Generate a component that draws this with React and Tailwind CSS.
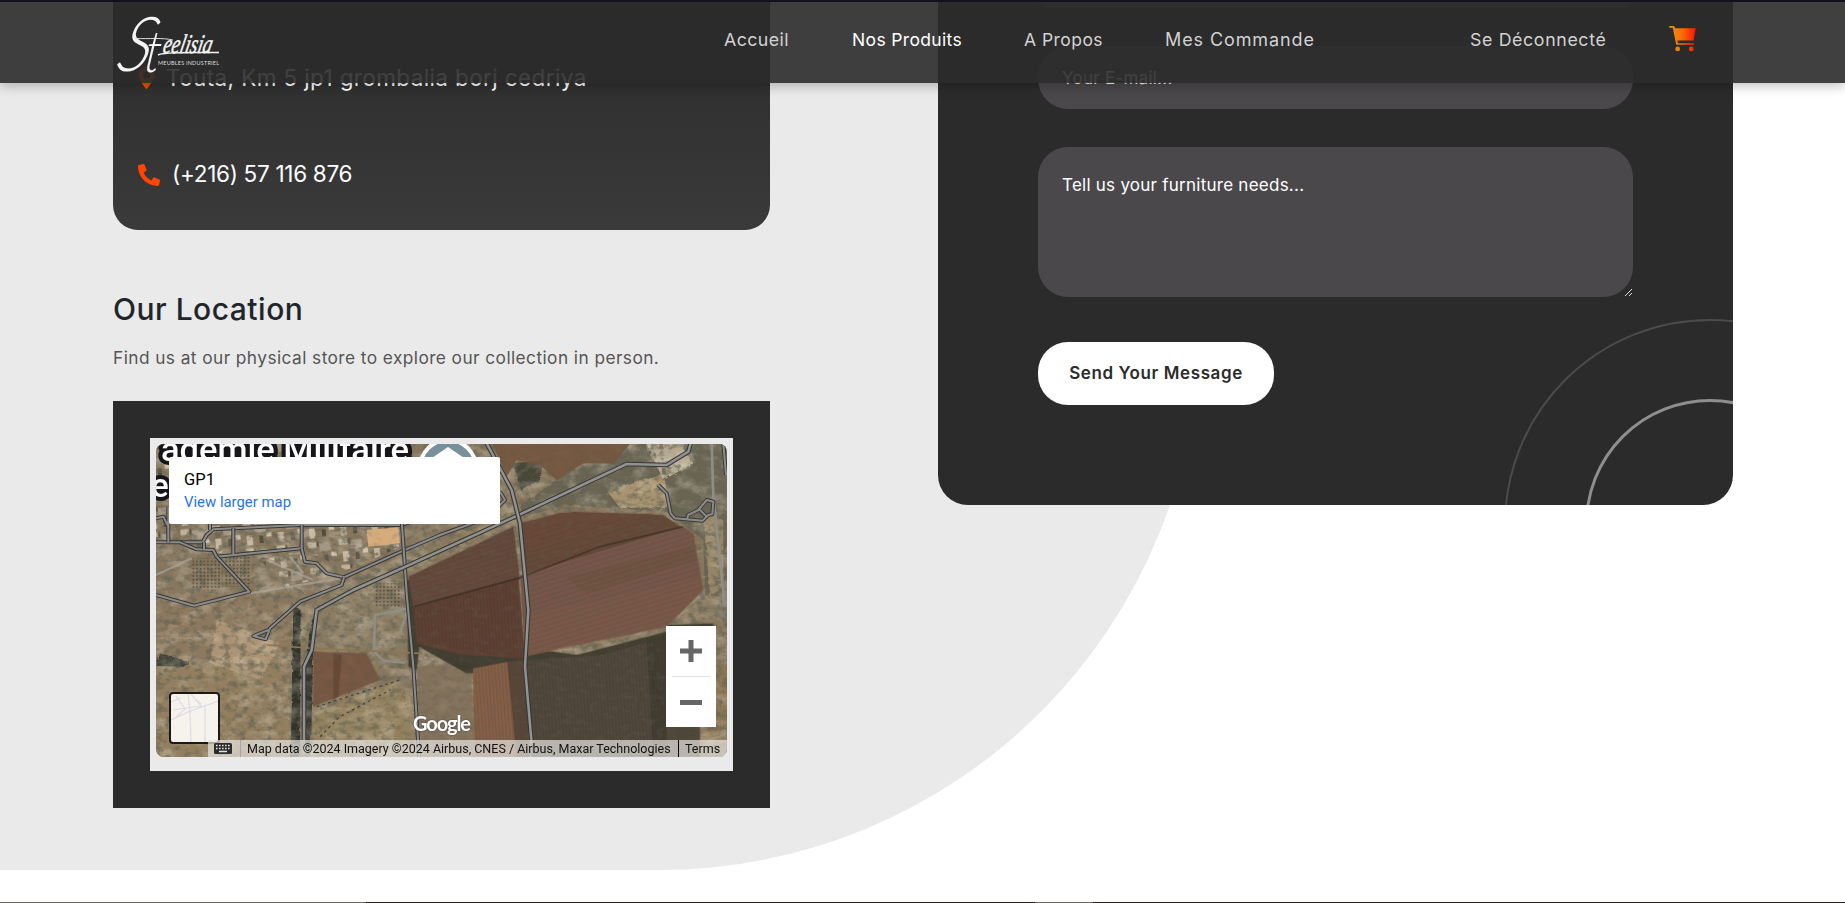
import { FaPhoneAlt, FaMapMarkerAlt } from "react-icons/fa";

const navItems = [
  { label: "Accueil", cls: "ml-[724px] w-[128px] text-[17.8px] tracking-[0.4px] text-[#d2d2d2]" },
  { label: "Nos Produits", cls: "w-[172px] text-[17.5px] tracking-[0.35px] text-white" },
  { label: "A Propos", cls: "w-[141px] text-[17.5px] tracking-[0.45px] text-[#d2d2d2]" },
  { label: "Mes Commande", cls: "w-[305px] text-[18px] tracking-[0.9px] text-[#d2d2d2]" },
  { label: "Se Déconnecté", cls: "w-[199px] text-[17.8px] tracking-[0.62px] text-[#d2d2d2]" },
];

function Logo() {
  return (
    <svg className="absolute left-[108px] top-[6px] overflow-visible" width="118" height="72" viewBox="-4 -4 118 72" fill="#f4f4f4">
      <text x="0" y="0" fontFamily="Lato" fontWeight="300" fontStyle="italic" fontSize="76" transform="translate(2 59) skewX(-18) scale(.86 1)">S</text>
      <text x="0" y="0" fontFamily="Lato" fontWeight="300" fontStyle="italic" fontSize="58" transform="translate(31 60) skewX(-8) scale(.8 1)">t</text>
      <path d="M23 26.500C38 27 50 25.500 61 28" stroke="#ddd" strokeWidth="1" fill="none" />
      <text x="0" y="0" fontFamily="Liberation Serif" fontStyle="italic" fontSize="27" textLength="49" lengthAdjust="spacingAndGlyphs" stroke="#f4f4f4" strokeWidth=".5" transform="translate(50 41) skewX(-12)">eelisia</text>
      <path d="M46 43C52 39.500 80 41 107 40.500" stroke="#f4f4f4" strokeWidth="1.500" fill="none" />
      <text x="46" y="53" fontFamily="Lato" fontSize="5.500" textLength="61" fill="#ddd">MEUBLES INDUSTRIEL</text>
    </svg>
  );
}

function CartIcon() {
  return (
    <svg className="mt-[-1px]" width="28" height="27" viewBox="0 0 28 27">
      <defs>
        <linearGradient id="cart" x1="0" x2="1">
          <stop offset="0" stopColor="#e39a10" />
          <stop offset=".5" stopColor="#fa6a05" />
          <stop offset="1" stopColor="#fb1203" />
        </linearGradient>
      </defs>
      <path fill="url(#cart)" d="M.3 0H5l1.300 2.200H26.800L24.500 14.500H8.500l.4 2.700H25v1.600H7.200L3.800 1.800H.3zM8.700 20.500a2.400 2.400 0 1 1 0 4.800 2.400 2.400 0 0 1 0-4.800zM22.300 20.500a2.400 2.400 0 1 1 0 4.800 2.400 2.400 0 0 1 0-4.800z" />
    </svg>
  );
}

const roads = [
  "M168 487H308L320 465L340 448L600 435H905L1200 330",
  "M205 487V380M168 415L190 410L205 440",
  "M240 487L290 508L340 510L350 530L605 505V435",
  "M605 505L615 545L650 550L680 580L732 592L910 512L1020 465L1200 400",
  "M350 530L448 635L282 677L168 645",
  "M312 487V507M400 445V522M330 430V450",
  "M732 592L725 615L600 665L510 745L497 778L460 768L510 748",
  "M905 420L920 640L940 860L958 1140",
];
const mainRoads = [
  "M612 1080V860L635 810L650 690L760 630L910 563L1260 403L1580 252L1700 255L1765 215L1775 180",
  "M1155 180L1235 330L1260 430L1285 690L1275 860L1295 1090",
];
const eastRoads = [
  "M775 195L800 220L812 280L825 295L908 302L925 285L937 282L940 245L920 240L895 270L865 285L860 300M895 265L920 290",
  "M300 215L315 240L290 265",
  "M970 70L978 165",
];

function Satellite() {
  return (
    <svg className="absolute inset-0" width="571" height="313" viewBox="0 0 571 313">
      <defs>
        <filter id="grain" x="0" y="0" width="100%" height="100%">
          <feTurbulence type="fractalNoise" baseFrequency=".12 .16" numOctaves="5" seed="8" />
          <feColorMatrix values="0 0 0 0 .13  0 0 0 0 .13  0 0 0 0 .09  3 0 0 0 -1.450" />
        </filter>
        <filter id="light" x="0" y="0" width="100%" height="100%">
          <feTurbulence type="fractalNoise" baseFrequency=".05 .08" numOctaves="5" seed="23" />
          <feColorMatrix values="0 0 0 0 .8  0 0 0 0 .72  0 0 0 0 .57  0 3 0 0 -1.300" />
        </filter>
        <filter id="rough" x="-10%" y="-10%" width="120%" height="120%">
          <feTurbulence type="fractalNoise" baseFrequency=".05" numOctaves="3" seed="4" />
          <feDisplacementMap in="SourceGraphic" scale="10" />
          <feGaussianBlur stdDeviation=".8" />
        </filter>
        <filter id="soft" x="-5%" y="-5%" width="110%" height="110%">
          <feTurbulence type="fractalNoise" baseFrequency=".05" numOctaves="2" seed="4" />
          <feDisplacementMap in="SourceGraphic" scale="4" />
          <feGaussianBlur stdDeviation=".8" />
        </filter>
        <pattern id="furrow" width="10" height="18" patternUnits="userSpaceOnUse" patternTransform="rotate(-4)">
          <path d="M2 0V18" stroke="#2d211a" strokeWidth="2" opacity=".25" />
        </pattern>
        <pattern id="furrow2" width="16" height="14" patternUnits="userSpaceOnUse" patternTransform="rotate(-17)">
          <path d="M0 3H16" stroke="#30231c" strokeWidth="3" opacity=".12" />
        </pattern>
        <pattern id="grove" width="11" height="11" patternUnits="userSpaceOnUse">
          <circle cx="5" cy="5" r="3" fill="#3a362a" opacity=".65" />
        </pattern>
        <pattern id="blocks" width="94" height="78" patternUnits="userSpaceOnUse" patternTransform="rotate(-6)">
          <rect x="4" y="4" width="26" height="18" fill="#c9bba4" />
          <rect x="38" y="10" width="34" height="26" fill="#a79c8b" />
          <rect x="12" y="42" width="18" height="30" fill="#cdc0a9" />
          <rect x="50" y="47" width="12" height="22" fill="#4a4537" />
          <rect x="72" y="38" width="16" height="14" fill="#d8ccb8" />
          <rect x="31" y="4" width="6" height="16" fill="#544b3a" />
        </pattern>
      </defs>
      <rect width="571" height="313" fill="#87775f" />
      <g transform="translate(-56 -64) scale(.33333)">
        <g filter="url(#rough)">
          <path d="M168 650L460 640L590 690L580 840L168 840Z" fill="#8d795e" />
          <path d="M168 860L560 830L575 1140H168Z" fill="#937f61" />
          <path d="M350 720L540 790L480 900L330 850Z" fill="#ab9474" />
          <path d="M650 650L900 580L920 820L640 800Z" fill="#8a7b64" />
          <path d="M180 820L270 845L250 860L170 858Z" fill="#393a30" />
          <path d="M580 680L602 690L600 1140H572Z" fill="#2f302a" />
          <path d="M632 730L650 690L640 820L632 1140H615L618 860Z" fill="#34352e" />
          <path d="M640 1000L880 910L940 960L950 1140H640Z" fill="#93825f" />
          <path d="M1380 290L1540 220L1650 180H1880V740L1815 650L1810 480L1700 395L1400 375L1270 410L1260 380Z" fill="#6a6552" />
          <path d="M1240 250L1330 240L1320 300L1260 330Z" fill="#494638" />
          <path d="M1520 330L1690 280L1710 380L1560 385Z" fill="#a69270" />
          <path d="M1640 190L1740 190L1780 250L1690 300Z" fill="#b5a991" />
          <path d="M1740 640L1860 650L1840 730L1760 720Z" fill="#8b7b62" />
          <path d="M1810 400L1870 420V620L1830 650Z" fill="#958465" />
          <path d="M910 550L1240 390L1250 420L920 580Z" fill="#8b7c5c" />
          <path d="M1830 860L1890 850V1120H1790Z" fill="#8b7654" />
        </g>
        <path d="M168 180H905V500L740 570L605 505L330 520L168 470Z" fill="url(#blocks)" opacity=".85" />
        <path d="M470 530L610 515L680 590L560 620Z" fill="url(#blocks)" opacity=".8" />
        <path d="M1630 190L1760 190L1790 250L1690 300Z" fill="url(#blocks)" opacity=".5" />
      </g>
      <rect width="571" height="313" filter="url(#light)" opacity=".3" />
      <rect width="571" height="313" filter="url(#grain)" opacity=".7" />
      <g transform="translate(-56 -64) scale(.33333)">
        <g filter="url(#soft)">
          <path d="M1170 175L1600 180L1540 250L1450 250L1370 300L1320 255L1250 240L1220 290Z" fill="#74543f" opacity=".9" />
          <path d="M640 815L800 820L840 900L640 980Z" fill="#73513d" opacity=".85" />
          <path d="M700 820L725 825L715 950L700 958Z" fill="#604231" opacity=".7" />
          <path d="M950 860L1110 850L1130 1140H965Z" fill="#82705a" opacity=".75" />
          <path d="M1255 800L1430 825L1700 755L1700 735L1840 730V790L1430 850L1100 880L940 790Z" fill="#3a372b" opacity=".9" />
          <path d="M920 600L950 600L970 700L950 870L925 860Z" fill="#404032" />
          <path d="M925 590L1240 440L1260 600L1255 600L940 690Z" fill="#64483a" />
          <path d="M940 685L1255 590L1275 835L1090 825L950 790Z" fill="#5d4031" />
          <path d="M1255 430L1420 395L1690 405L1750 445L1270 595Z" fill="#654a39" />
          <path d="M1256 432L1380 398L1660 402L1500 460L1262 520Z" fill="#674938" />
          <path d="M1260 585L1750 440L1780 460L1810 630L1700 740L1400 800L1275 830Z" fill="#755748" />
          <path d="M1275 700L1500 660L1800 590L1810 630L1700 740L1400 805L1275 830Z" fill="#805c4c" opacity=".5" />
          <path d="M1400 590L1780 500L1790 540L1460 640Z" fill="#69503f" opacity=".45" />
          <path d="M1118 865L1225 845L1255 1140H1125Z" fill="#855f47" />
          <path d="M1222 845L1280 840L1290 1140H1250Z" fill="#574537" />
          <path d="M1280 840L1500 825L1700 770V1140H1295Z" fill="#50463b" />
          <path d="M1640 780L1720 760L1800 740V1140H1660Z" fill="#3e3c31" opacity=".8" />
        </g>
        <path d="M940 680L1255 590L1275 835L950 790ZM1280 840L1500 825L1700 770V1140H1295ZM1118 865L1225 845L1255 1140H1125Z" fill="url(#furrow)" />
        <path d="M930 590L1240 440L1690 405L1805 480V630L1700 740L1275 830V580L940 680Z" fill="url(#furrow2)" />
        <path d="M800 450L895 442L900 490L805 500Z" fill="#d7ac7c" />
        <rect x="275" y="535" width="92" height="95" fill="url(#grove)" />
        <rect x="375" y="530" width="75" height="90" fill="url(#grove)" />
        <rect x="825" y="610" width="80" height="70" fill="url(#grove)" />
      </g>
      <rect width="571" height="313" filter="url(#grain)" opacity=".22" />
      <g transform="translate(-56 -64) scale(.33333)" fill="none" strokeLinejoin="round">
        <path d="M940 680L1255 595L1500 500L1750 440" stroke="#33291f" strokeWidth="6" opacity=".55" />
        <path d="M448 640L720 595M168 585L275 535M500 540L640 600M570 530L610 580" stroke="#a8a59a" strokeWidth="7" opacity=".7" />
        <path d="M925 685L900 760M925 685L825 705L822 815L850 842L915 848" stroke="#8f8f87" strokeWidth="8" opacity=".9" />
        <path d="M500 795L640 805L960 820" stroke="#8e7654" strokeWidth="5" />
        <path d="M650 980L900 900M660 1070L720 1010L870 930" stroke="#40382a" strokeWidth="4" strokeDasharray="8 10" opacity=".8" />
        <path d="M1835 190L1840 350L1875 680" stroke="#8e8e88" strokeWidth="8" />
        {roads.map((d) => (
          <g key={d}>
            <path d={d} stroke="#383838" strokeWidth="12" />
            <path d={d} stroke="#8b8b89" strokeWidth="6" />
          </g>
        ))}
        {mainRoads.map((d) => (
          <g key={d}>
            <path d={d} stroke="#383838" strokeWidth="14" />
            <path d={d} stroke="#929290" strokeWidth="7.500" />
          </g>
        ))}
        <g transform="translate(900 120)">
          {eastRoads.map((d) => (
            <g key={d}>
              <path d={d} stroke="#3b3b3a" strokeWidth="12" />
              <path d={d} stroke="#8b8b89" strokeWidth="6" />
            </g>
          ))}
        </g>
      </g>
      <g fontFamily="Roboto" fontWeight="500" fontSize="33" fill="#fff" stroke="#15151a" strokeWidth="8" paintOrder="stroke" strokeLinejoin="round">
        <text x="5" y="17" textLength="248" lengthAdjust="spacingAndGlyphs">ademie Militaire</text>
        <text x="-5" y="53">e</text>
      </g>
      <circle cx="292" cy="24" r="28" fill="#78909c" stroke="#fff" strokeWidth="4" />
      <path d="M270 18L292 3L314 18Z" fill="#fff" />
    </svg>
  );
}

function MapWidget() {
  return (
    <div className="relative h-[313px] w-[571px] overflow-hidden rounded-[8px] font-[Roboto,sans-serif]">
      <Satellite />
      <div className="absolute left-[13px] top-[13px] h-[67px] w-[331px] rounded-[2px] bg-white pl-[15px] pt-[12px]">
        <div className="text-[16.5px] leading-[22px] text-black">GP1</div>
        <div className="text-[14.9px] leading-[22px] text-[#2a73e8]">View larger map</div>
      </div>
      <div className="absolute left-[13px] top-[248px] h-[52px] w-[51px] overflow-hidden rounded-[4px] border-2 border-[#1c1817] bg-[#f5f3eb]">
        <svg width="47" height="48" viewBox="0 0 47 48" fill="none" stroke="#dcdce8" strokeWidth="1.200">
          <path d="M0 26L17 18L47 7M17 0L19 18L20 48M2 16L16 14L30 12L20 0M34 12V48M5 2L14 15L3 25M22 3L30 10M0 8L10 4" />
        </svg>
      </div>
      <div className="absolute left-[510px] top-[182px] flex h-[101px] w-[50px] flex-col items-center bg-white">
        <svg width="50" height="101" viewBox="0 0 50 101">
          <path d="M14 22.500h8.500V14h5v8.500H36v5h-8.500V36h-5v-8.500H14zM14 74h22v5H14z" fill="#666" />
          <path d="M6 50.500H44" stroke="#e2e2e2" />
        </svg>
      </div>
      <div className="absolute left-[257px] top-[267px] text-[20px] font-bold leading-[24px] tracking-[-1.1px] text-white [font-family:Lato,sans-serif] [text-shadow:0_0_2px_#333]">Google</div>
      <div className="absolute bottom-0 right-0 flex h-[17px] w-[519px] items-center bg-[#e7e4df]/70 text-[12.5px] text-[#111]">
        <svg className="ml-[6px]" width="18" height="11" viewBox="0 0 18 11">
          <rect width="18" height="11" rx="1.500" fill="#2b2b2b" />
          <path d="M2 2.500h14M2 5.500h14" stroke="#e5e5e5" strokeWidth="1.600" strokeDasharray="1.600 1.400" />
          <path d="M5 8.500h8" stroke="#e5e5e5" strokeWidth="1.500" />
        </svg>
        <span className="ml-[8px] h-[17px] w-px bg-[#a9a49d]" />
        <span className="ml-[6px] w-[431px] whitespace-nowrap pt-px">Map data ©2024 Imagery ©2024 Airbus, CNES / Airbus, Maxar Technologies</span>
        <span className="h-[17px] w-px bg-black" />
        <span className="ml-[6px] pt-px">Terms</span>
      </div>
    </div>
  );
}

export default function App() {
  return (
    <div className="relative h-[903px] w-[1845px] overflow-hidden bg-white font-[Inter,sans-serif]">
      <div className="absolute left-0 top-0 h-[870px] w-[65%] rounded-br-[540px] bg-[#eaeaea]" />

      <main className="relative flex h-[902px] items-start pl-[113px]">
        <section className="w-[657px]">
          <div className="flex h-[230px] flex-col rounded-b-[25px] bg-gradient-to-b from-[#2b2b2b] to-[#3a3a3a] px-[24px] pt-[60px] text-[22px] text-white">
            <div className="flex h-[36px] items-center">
              <FaMapMarkerAlt className="ml-[1px] h-[22px] w-[17px] text-[#ff4500]" />
              <span className="ml-[11px] whitespace-nowrap text-[22.500px] tracking-[0.38px]">Touta, Km 5 jp1 grombalia borj cedriya</span>
            </div>
            <div className="mt-[60px] flex h-[36px] items-center">
              <FaPhoneAlt className="ml-[1px] mt-[1px] h-[22px] w-[22px] text-[#ff4500]" />
              <span className="ml-[12px] whitespace-nowrap text-[22.500px] tracking-[-0.3px]">(+216) 57 116 876</span>
            </div>
          </div>
          <h2 className="mt-[57px] text-[30px] font-medium leading-[44px] tracking-[0.5px] text-[#212529]">Our Location</h2>
          <p className="mt-[14px] whitespace-nowrap text-[17.3px] leading-[26px] tracking-[0.43px] text-[#555]">
            Find us at our physical store to explore our collection in person.
          </p>
          <div className="mt-[30px] h-[407px] bg-[#2b2b2b] p-[37px]">
            <div className="h-[333px] w-[583px] bg-[#eaeaea] p-[6px]">
              <MapWidget />
            </div>
          </div>
        </section>

        <section className="relative ml-[168px] h-[505px] w-[795px] overflow-hidden rounded-b-[30px] bg-[#2b2b2b] pl-[100px]">
          <div className="absolute left-[566px] top-[319px] h-[412px] w-[412px] rounded-full border-2 border-[#4b4b4b]" />
          <div className="absolute left-[647px] top-[399px] h-[250px] w-[250px] rounded-full border-[3px] border-[#8e8e8e]" />
          <div className="h-[8px] w-[595px] rounded-b-[30px] bg-[#4b484b]" />
          <div className="mt-[38px] flex h-[63px] w-[595px] items-center rounded-[30px] bg-[#4b484b] pl-[24px] pt-[3px] text-[17px] tracking-[0.25px] text-white">Your E-mail...</div>
          <div className="relative mt-[38px] h-[150px] w-[595px] rounded-[30px] bg-[#4b484b] pl-[24px] pt-[25px] text-[17px] leading-[26px] tracking-[0.25px] text-white">
            Tell us your furniture needs...
            <svg className="absolute bottom-[1px] right-[1px]" width="7" height="7" viewBox="0 0 7 7">
              <path d="M0 7L7 0M4 7L7 4" stroke="#ddd" strokeWidth="1" />
            </svg>
          </div>
          <button className="mt-[45px] flex h-[63px] w-[236px] items-center justify-center whitespace-nowrap rounded-[30px] bg-white text-[17px] font-semibold tracking-[0.6px] text-[#2b2b2b]">
            Send Your Message
          </button>
        </section>
      </main>

      <header className="absolute inset-x-0 top-0 flex h-[83px] items-center border-t-2 border-[#12121d] bg-[#2b2b2b]/90 pb-[5px] shadow-[0_4px_10px_rgba(0,0,0,0.22)]">
        <Logo />
        {navItems.map((item) => (
          <a key={item.label} className={"shrink-0 whitespace-nowrap leading-[26px] " + item.cls}>
            {item.label}
          </a>
        ))}
        <CartIcon />
      </header>

      <footer className="flex h-px w-full bg-[#2a1c1b]">
        <span className="h-px w-[366px] bg-[#6a6462]" />
        <span className="ml-[669px] h-px w-[58px] bg-[#6a6462]" />
      </footer>
    </div>
  );
}
